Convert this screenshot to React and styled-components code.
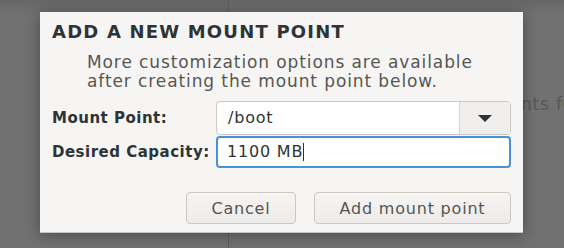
import React from 'react';
import styled, { createGlobalStyle } from 'styled-components';

const GlobalStyle = createGlobalStyle`
    html, body {
        margin: 0;
        padding: 0;
        width: 564px;
        height: 248px;
        overflow: hidden;
    }
    body {
        font-family: 'DejaVu Sans', 'Noto Sans', sans-serif;
    }
`;

const Backdrop = styled.div`
    position: relative;
    width: 564px;
    height: 248px;
    background: linear-gradient(180deg, #666 0px, #717171 14px, #717171 100%);
    overflow: hidden;
`;

const Divider = styled.div`
    position: absolute;
    left: 228px;
    top: 0;
    bottom: 0;
    width: 1px;
    background: #5e5e5e;
`;

const PageText = styled.span`
    position: absolute;
    left: 521px;
    top: 94px;
    font-size: 17px;
    letter-spacing: 0.8px;
    color: #585858;
    white-space: nowrap;
`;

const Stage = styled.div`
    position: relative;
    padding: 12px 0 0 40px;
`;

const Dialog = styled.div`
    width: 483px;
    height: 221px;
    box-sizing: border-box;
    background: #f6f5f4;
    border-bottom: 1px solid #c8c6c3;
    box-shadow: 0 2px 14px rgba(0, 0, 0, 0.35);
    padding: 8px 12px 0 12px;
    display: flex;
    flex-direction: column;
`;

const Title = styled.h1`
    margin: 0;
    font-size: 18px;
    letter-spacing: 1.2px;
    font-weight: 700;
    color: #2e3436;
    line-height: 24px;
`;

const Description = styled.p`
    margin: 9px 0 0 35px;
    font-size: 17px;
    letter-spacing: 0.9px;
    line-height: 19px;
    color: #555753;
`;

const Form = styled.div`
    margin-top: 10px;
    display: grid;
    grid-template-columns: 164px 295px;
    row-gap: 1px;
    align-items: center;
`;

const Label = styled.label`
    font-size: 15px;
    letter-spacing: 0.5px;
    font-weight: 700;
    color: #2e3436;
`;

const Combo = styled.div`
    display: flex;
    height: 34px;
    box-sizing: border-box;
    border: 1px solid #cdc7c2;
    border-radius: 4px;
    background: #fff;
    overflow: hidden;
`;

const ComboText = styled.div`
    flex: 1;
    padding-left: 11px;
    font-size: 16px;
    letter-spacing: 0.8px;
    line-height: 31px;
    color: #2e3436;
`;

const ComboButton = styled.div`
    width: 50px;
    border-left: 1px solid #d6d1cd;
    background: #f1efed;
    display: flex;
    align-items: center;
    justify-content: center;
`;

const Entry = styled.div`
    height: 32px;
    box-sizing: border-box;
    border: 2px solid #4a90d9;
    border-radius: 4px;
    background: #fff;
    padding-left: 9px;
    font-size: 16px;
    letter-spacing: 0.8px;
    line-height: 28px;
    color: #2e3436;
    display: flex;
    align-items: center;
`;

const Caret = styled.span`
    display: inline-block;
    width: 1px;
    height: 18px;
    background: #2e3436;
`;

const Actions = styled.div`
    margin-top: auto;
    margin-bottom: 8px;
    display: flex;
    justify-content: flex-end;
    gap: 18px;
`;

const Button = styled.button`
    width: ${p => p.$width}px;
    height: 32px;
    border: 1px solid #cdc7c2;
    border-radius: 4px;
    background: linear-gradient(180deg, #f6f5f4, #edebe9);
    font-family: inherit;
    font-size: 16px;
    letter-spacing: 0.8px;
    color: #555753;
`;

const App = () => {
    return (
        <>
            <GlobalStyle />
            <Backdrop>
                <Divider />
                <PageText>nts fo</PageText>
                <Stage>
                    <Dialog>
                        <Title>ADD A NEW MOUNT POINT</Title>
                        <Description>
                            More customization options are available<br />
                            after creating the mount point below.
                        </Description>
                        <Form>
                            <Label>Mount Point:</Label>
                            <Combo>
                                <ComboText>/boot</ComboText>
                                <ComboButton>
                                    <svg width="14" height="7" viewBox="0 0 14 7">
                                        <path d="M0 0 L14 0 L7 7 Z" fill="#2e3436" />
                                    </svg>
                                </ComboButton>
                            </Combo>
                            <Label>Desired Capacity:</Label>
                            <Entry>1100 MB<Caret /></Entry>
                        </Form>
                        <Actions>
                            <Button $width={110}>Cancel</Button>
                            <Button $width={197}>Add mount point</Button>
                        </Actions>
                    </Dialog>
                </Stage>
            </Backdrop>
        </>
    );
};

export default App;
